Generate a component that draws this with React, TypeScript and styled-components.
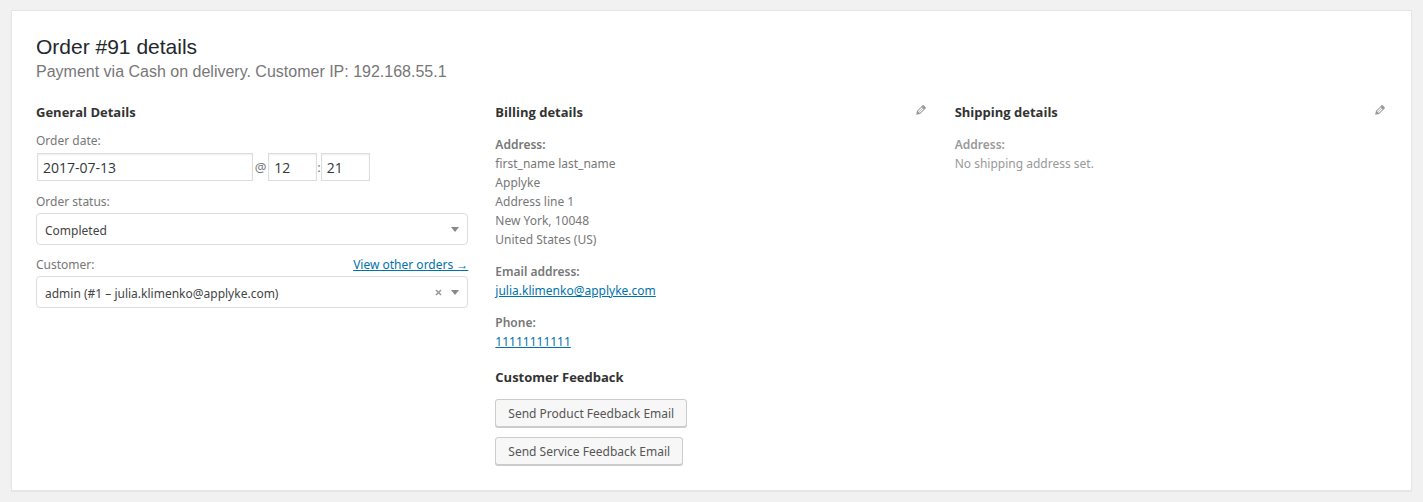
import React, { useState } from "react";
import styled, { createGlobalStyle } from "styled-components";

const GlobalStyle = createGlobalStyle`
  *, *::before, *::after { box-sizing: border-box; }
  body {
    margin: 0;
    background: #f1f1f1;
    color: #777;
    font: 12px/19px "Segoe UI", "Noto Sans", sans-serif;
  }
`;

const Panel = styled.main`
  margin: 10px 11px;
  padding: 24px 24px 25px;
  background: #fff;
  border: 1px solid #e5e5e5;
  box-shadow: 0 1px 1px rgba(0, 0, 0, 0.04);
`;

const Title = styled.h1`
  margin: 0;
  color: #23282d;
  font: 400 21px/24px "Liberation Sans", Arial, sans-serif;
`;

const Subtitle = styled.p`
  margin: 0;
  font: 400 16px/26px "Liberation Sans", Arial, sans-serif;
`;

const Columns = styled.div`
  display: grid;
  grid-template-columns: repeat(3, minmax(0, 1fr));
  gap: 27px;
  margin-top: 17px;
`;

const ColumnHead = styled.div`
  display: flex;
  justify-content: space-between;
  align-items: flex-start;
`;

const Heading = styled.h2`
  margin: 0;
  color: #333;
  font: 700 13px/20px "Segoe UI", "Open Sans", sans-serif;
`;

const EditButton = styled.button`
  display: flex;
  padding: 1px 0;
  border: 0;
  background: none;
  color: #999;
  cursor: pointer;
`;

const Fields = styled.form`
  display: flex;
  flex-direction: column;
  gap: 10px;
  margin-top: 9px;
`;

const Field = styled.div`
  display: flex;
  flex-direction: column;
  gap: 2px;
`;

const FieldHead = styled.div`
  display: flex;
  justify-content: space-between;
`;

const DateRow = styled.div`
  display: flex;
  align-items: center;
  padding: 1px 0 1px 1px;
`;

const TextInput = styled.input<{ $wide?: boolean }>`
  width: ${(p) => (p.$wide ? "50%" : "49px")};
  height: 28px;
  padding: 0 5px;
  border: 1px solid #ddd;
  background: #fff;
  box-shadow: inset 0 1px 2px rgba(0, 0, 0, 0.07);
  color: #32373c;
  font: 14px "Segoe UI", "Open Sans", sans-serif;
`;

const Separator = styled.span<{ $gap?: boolean }>`
  padding: 0 ${(p) => (p.$gap ? "2px" : "0")};
  font-size: 13px;
`;

const SelectBox = styled.div`
  display: grid;
  align-items: center;
  grid-template-columns: 1fr auto auto;
`;

const Select = styled.select`
  grid-area: 1 / 1 / 2 / 4;
  width: 100%;
  height: 32px;
  padding: 2px 40px 0 8px;
  appearance: none;
  border: 1px solid #ddd;
  border-radius: 4px;
  background: #fff;
  color: #444;
  font: inherit;
`;

const ClearButton = styled.button`
  grid-area: 1 / 2;
  display: flex;
  padding: 4px;
  border: 0;
  background: none;
  color: #999;
  cursor: pointer;
`;

const Arrow = styled.svg`
  grid-area: 1 / 3;
  margin: 0 9px 0 5px;
  pointer-events: none;
`;

const Link = styled.a`
  color: #0073aa;
  text-decoration: underline;
`;

const Details = styled.div<{ $muted?: boolean }>`
  display: flex;
  flex-direction: column;
  gap: 13px;
  margin: 13px 0 16px;
  color: ${(p) => (p.$muted ? "#999" : "#777")};
`;

const Detail = styled.p`
  margin: 0;
`;

const Label = styled.strong`
  display: block;
  font-weight: 600;
`;

const Actions = styled.div`
  display: flex;
  flex-direction: column;
  align-items: flex-start;
  gap: 10px;
  margin-top: 12px;
`;

const Button = styled.button`
  height: 28px;
  padding: 0 12px;
  border: 1px solid #ccc;
  border-radius: 3px;
  background: #f7f7f7;
  box-shadow: 0 1px 0 #ccc;
  color: #555;
  font: inherit;
  cursor: pointer;
`;

function Edit({ label }: { label: string }) {
  return (
    <EditButton type="button" aria-label={label}>
      <svg width="14" height="14" viewBox="0 0 20 20" fill="currentColor">
        <path d="M13.89 3.39l2.71 2.72c.46.46.42 1.24.03 1.64l-8.01 8.02-5.56 1.16 1.16-5.58s7.6-7.63 7.99-8.03c.39-.39 1.22-.39 1.68.07zm-2.73 2.79l-5.59 5.61 1.11 1.11 5.54-5.65zm-2.97 8.23l5.58-5.6-1.07-1.08-5.59 5.6z" />
      </svg>
    </EditButton>
  );
}

function DownArrow() {
  return (
    <Arrow width="8" height="5" viewBox="0 0 8 5" fill="#888">
      <path d="M0 0h8L4 5z" />
    </Arrow>
  );
}

export default function App() {
  const [customer, setCustomer] = useState("1");
  return (
    <>
      <GlobalStyle />
      <Panel>
        <Title>Order #91 details</Title>
        <Subtitle>Payment via Cash on delivery. Customer IP: 192.168.55.1</Subtitle>
        <Columns>
          <section>
            <Heading>General Details</Heading>
            <Fields>
              <Field>
                <label htmlFor="date">Order date:</label>
                <DateRow>
                  <TextInput id="date" $wide defaultValue="2017-07-13" />
                  <Separator $gap>@</Separator>
                  <TextInput aria-label="Hour" defaultValue="12" />
                  <Separator>:</Separator>
                  <TextInput aria-label="Minute" defaultValue="21" />
                </DateRow>
              </Field>
              <Field>
                <label htmlFor="status">Order status:</label>
                <SelectBox>
                  <Select id="status" defaultValue="completed">
                    <option value="completed">Completed</option>
                  </Select>
                  <DownArrow />
                </SelectBox>
              </Field>
              <Field>
                <FieldHead>
                  <label htmlFor="customer">Customer:</label>
                  <Link href="#orders">View other orders →</Link>
                </FieldHead>
                <SelectBox>
                  <Select id="customer" value={customer} onChange={(e) => setCustomer(e.target.value)}>
                    <option value="" />
                    <option value="1">admin (#1 – julia.klimenko@applyke.com)</option>
                  </Select>
                  <ClearButton type="button" aria-label="Clear customer" onClick={() => setCustomer("")}>
                    <svg width="7" height="7" viewBox="0 0 7 7" stroke="currentColor" strokeWidth="1.6">
                      <path d="M1 1l5 5M6 1L1 6" />
                    </svg>
                  </ClearButton>
                  <DownArrow />
                </SelectBox>
              </Field>
            </Fields>
          </section>

          <section>
            <ColumnHead>
              <Heading>Billing details</Heading>
              <Edit label="Edit billing details" />
            </ColumnHead>
            <Details>
              <Detail>
                <Label>Address:</Label>
                first_name last_name
                <br />
                Applyke
                <br />
                Address line 1
                <br />
                New York, 10048
                <br />
                United States (US)
              </Detail>
              <Detail>
                <Label>Email address:</Label>
                <Link href="mailto:julia.klimenko@applyke.com">julia.klimenko@applyke.com</Link>
              </Detail>
              <Detail>
                <Label>Phone:</Label>
                <Link href="tel:11111111111">11111111111</Link>
              </Detail>
            </Details>
            <Heading>Customer Feedback</Heading>
            <Actions>
              <Button type="button">Send Product Feedback Email</Button>
              <Button type="button">Send Service Feedback Email</Button>
            </Actions>
          </section>

          <section>
            <ColumnHead>
              <Heading>Shipping details</Heading>
              <Edit label="Edit shipping details" />
            </ColumnHead>
            <Details $muted>
              <Detail>
                <Label>Address:</Label>
                No shipping address set.
              </Detail>
            </Details>
          </section>
        </Columns>
      </Panel>
    </>
  );
}
